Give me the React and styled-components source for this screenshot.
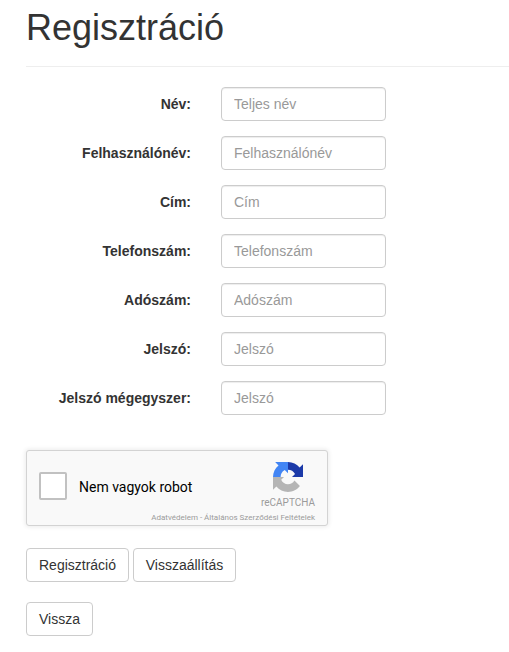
import React from 'react';
import styled, { createGlobalStyle } from 'styled-components';

const GlobalStyle = createGlobalStyle`
  *, *::before, *::after { box-sizing: border-box; }
  html, body { margin: 0; background: #fff; overflow: hidden; }
  body {
    font-family: "Liberation Sans", Arial, sans-serif;
    font-size: 14px;
    line-height: 20px;
    color: #333;
  }
`;

const Page = styled.main`
  padding: 8px 0 0 26px;
`;

const Title = styled.h1`
  margin: 0 0 20px;
  padding-bottom: 19px;
  border-bottom: 1px solid #eee;
  font-size: 36px;
  font-weight: 400;
  line-height: 39px;
`;

const Form = styled.form`
  margin: 0;
`;

const Field = styled.div`
  display: grid;
  grid-template-columns: 165px 165px;
  column-gap: 30px;
  margin-bottom: 15px;
`;

const Label = styled.label`
  padding-top: 7px;
  text-align: right;
  font-weight: 700;
  white-space: nowrap;
`;

const Input = styled.input`
  width: 100%;
  height: 34px;
  padding: 6px 12px;
  border: 1px solid #ccc;
  border-radius: 4px;
  background: #fff;
  color: #555;
  font: inherit;
  box-shadow: inset 0 1px 1px rgba(0, 0, 0, 0.075);
  &::placeholder { color: #999; opacity: 1; }
`;

const Captcha = styled.section`
  display: grid;
  grid-template-columns: 28px 1fr 54px;
  grid-template-rows: 59px 15px;
  width: 302px;
  height: 76px;
  margin: 35px 0 22px;
  padding: 0 12px;
  border: 1px solid #d3d3d3;
  border-radius: 3px;
  background: #f9f9f9;
  box-shadow: 0 0 4px 1px rgba(0, 0, 0, 0.08);
  font-family: Roboto, sans-serif;
`;

const Checkbox = styled.button`
  width: 28px;
  height: 28px;
  margin-top: 21px;
  padding: 0;
  border: 2px solid #c1c1c1;
  border-radius: 2px;
  background: #fff;
`;

const CaptchaLabel = styled.span`
  margin: 28px 0 0 12px;
  font-size: 14px;
  line-height: 17px;
  color: #000;
`;

const Brand = styled.div`
  display: flex;
  flex-direction: column;
  align-items: center;
  padding-top: 11px;
  font-size: 10px;
  line-height: 10px;
  color: #9b9b9b;
  svg { display: block; margin-bottom: 6px; }
`;

const Terms = styled.div`
  grid-column: 1 / -1;
  padding-top: 3px;
  text-align: right;
  white-space: nowrap;
  font-size: 8px;
  line-height: 10px;
  color: #9b9b9b;
`;

const Actions = styled.div`
  display: flex;
  gap: 4px;
  margin-bottom: 20px;
`;

const Button = styled.button`
  width: ${({ $width }) => $width}px;
  height: 34px;
  padding: 0;
  border: 1px solid #ccc;
  border-radius: 4px;
  background: #fff;
  color: #333;
  font: inherit;
  white-space: nowrap;
`;

const fields = [
  ['nev', 'Név:', 'Teljes név', 'text'],
  ['felhasznalonev', 'Felhasználónév:', 'Felhasználónév', 'text'],
  ['cim', 'Cím:', 'Cím', 'text'],
  ['telefonszam', 'Telefonszám:', 'Telefonszám', 'text'],
  ['adoszam', 'Adószám:', 'Adószám', 'text'],
  ['jelszo', 'Jelszó:', 'Jelszó', 'password'],
  ['jelszo2', 'Jelszó mégegyszer:', 'Jelszó', 'password'],
];

function CaptchaLogo() {
  return (
    <svg width="30" height="30" viewBox="0 0 64 64" aria-hidden="true">
      <path fill="#1c3aa9" d="M64 32V4.7l-7.2 7.15C50.9 4.7 42 .1 32 .1v16.25c6.5 0 11.8 3.3 15 9.15L40.5 32z" />
      <path fill="#4285f4" d="M32 .1H4.6l7.15 7.2C4.6 13.15 0 22 0 32h16.25c0-6.5 3-11.9 8.75-14.9l7 7z" />
      <path fill="#b5b5b5" d="M0 32v27.3l7.2-7.15C13.05 59.3 21.95 63.9 31.95 63.9c10.4 0 19.6-4.95 25.45-12.6L45.7 39.4C42.5 44.8 38 47.6 32 47.6c-6.3 0-11.8-3.6-14.5-9.6l6-6z" />
    </svg>
  );
}

export default function App() {
  return (
    <>
      <GlobalStyle />
      <Page>
        <Title>Regisztráció</Title>
        <Form>
          {fields.map(([id, label, placeholder, type]) => (
            <Field key={id}>
              <Label htmlFor={id}>{label}</Label>
              <Input id={id} type={type} placeholder={placeholder} />
            </Field>
          ))}
          <Captcha>
            <Checkbox type="button" aria-label="Nem vagyok robot" />
            <CaptchaLabel>Nem vagyok robot</CaptchaLabel>
            <Brand>
              <CaptchaLogo />
              reCAPTCHA
            </Brand>
            <Terms>Adatvédelem - Általános Szerződési Feltételek</Terms>
          </Captcha>
          <Actions>
            <Button type="button" $width={103}>Regisztráció</Button>
            <Button type="reset" $width={103}>Visszaállítás</Button>
          </Actions>
          <Button type="button" $width={67}>Vissza</Button>
        </Form>
      </Page>
    </>
  );
}
